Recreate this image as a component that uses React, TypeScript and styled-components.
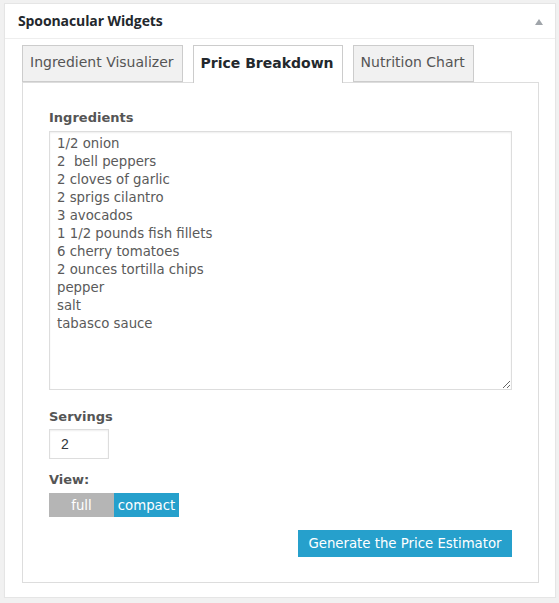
import React, { useState } from "react";
import styled, { createGlobalStyle } from "styled-components";

const Global = createGlobalStyle`
  html, body { margin: 0; padding: 0; background: #f1f1f1; }
  body { font-family: "DejaVu Sans", Verdana, sans-serif; }
  * { box-sizing: border-box; }
`;

const Widget = styled.div`
  margin: 3px 0 0 4px;
  width: 552px;
  height: 595px;
  background: #fff;
  border: 1px solid #e5e5e5;
  box-shadow: 0 1px 1px rgba(0, 0, 0, 0.04);
  display: flex;
  flex-direction: column;
`;

const Header = styled.div`
  height: 35px;
  border-bottom: 1px solid #eee;
  display: flex;
  align-items: center;
  justify-content: space-between;
  padding: 0 12px 0 13px;
`;

const Title = styled.h2`
  margin: 0;
  font-family: "Open Sans", sans-serif;
  font-size: 14px;
  font-weight: 700;
  letter-spacing: -0.1px;
  color: #23282d;
  line-height: 1;
`;

const Toggle = styled.span`
  width: 0;
  height: 0;
  border-left: 4px solid transparent;
  border-right: 4px solid transparent;
  border-bottom: 6px solid #a0a5aa;
  margin-top: 2px;
`;

const Body = styled.div`
  padding: 6px 16px 0 17px;
  display: flex;
  flex-direction: column;
`;

const TabBar = styled.div`
  display: flex;
  gap: 10px;
  height: 38px;
  position: relative;
  z-index: 1;
`;

const Tab = styled.button<{ $active?: boolean }>`
  height: ${(p) => (p.$active ? "38px" : "37px")};
  padding: 0 8px 3px 7px;
  border: 1px solid #ccc;
  border-bottom: ${(p) => (p.$active ? "none" : "1px solid #ccc")};
  background: ${(p) => (p.$active ? "#fff" : "#f1f1f1")};
  font-family: "DejaVu Sans", Verdana, sans-serif;
  font-size: 14px;
  font-weight: ${(p) => (p.$active ? 700 : 400)};
  color: ${(p) => (p.$active ? "#23282d" : "#555")};
  cursor: pointer;
  display: flex;
  align-items: center;
`;

const Panel = styled.div`
  margin-top: -1px;
  width: 517px;
  height: 501px;
  border: 1px solid #ddd;
  padding: 26px 26px 0 26px;
  display: flex;
  flex-direction: column;
`;

const Label = styled.label<{ $gap: number; $top?: number }>`
  display: block;
  font-size: 13px;
  font-weight: 700;
  line-height: 18px;
  color: #555;
  margin-top: ${(p) => p.$top ?? 0}px;
  margin-bottom: ${(p) => p.$gap}px;
`;

const Area = styled.textarea`
  width: 463px;
  height: 259px;
  border: 1px solid #ddd;
  box-shadow: inset 0 1px 2px rgba(0, 0, 0, 0.07);
  padding: 3px 7px;
  font-family: "DejaVu Sans", Verdana, sans-serif;
  font-size: 13.3px;
  line-height: 18px;
  color: #5a5a5a;
  resize: both;
  outline: none;
  margin: 0;
`;

const NumberInput = styled.input`
  width: 60px;
  height: 30px;
  border: 1px solid #ddd;
  box-shadow: inset 0 1px 2px rgba(0, 0, 0, 0.07);
  padding: 0 11px;
  font-family: "Liberation Sans", Arial, sans-serif;
  font-size: 14px;
  color: #32373c;
  outline: none;
  margin: 0;
`;

const Switch = styled.div`
  display: flex;
`;

const SwitchOption = styled.button<{ $on?: boolean }>`
  width: 65px;
  height: 24px;
  border: none;
  padding: 0;
  background: ${(p) => (p.$on ? "#26a0cc" : "#b5b5b5")};
  color: #fff;
  font-family: "DejaVu Sans", Verdana, sans-serif;
  font-size: 13.3px;
  cursor: pointer;
`;

const Actions = styled.div`
  display: flex;
  justify-content: flex-end;
  margin-top: 13px;
`;

const Primary = styled.button`
  width: 214px;
  height: 27px;
  border: none;
  padding: 0;
  background: #26a0cc;
  color: #fff;
  font-family: "DejaVu Sans", Verdana, sans-serif;
  font-size: 13.3px;
  cursor: pointer;
`;

const ingredients = `1/2 onion
2  bell peppers
2 cloves of garlic
2 sprigs cilantro
3 avocados
1 1/2 pounds fish fillets
6 cherry tomatoes
2 ounces tortilla chips
pepper
salt
tabasco sauce`;

export default function App() {
  const [tab, setTab] = useState(1);
  const [view, setView] = useState("compact");
  const tabs = ["Ingredient Visualizer", "Price Breakdown", "Nutrition Chart"];
  return (
    <>
      <Global />
      <Widget>
        <Header>
          <Title>Spoonacular Widgets</Title>
          <Toggle />
        </Header>
        <Body>
          <TabBar>
            {tabs.map((t, i) => (
              <Tab key={t} $active={i === tab} onClick={() => setTab(i)}>
                {t}
              </Tab>
            ))}
          </TabBar>
          <Panel>
            <Label $gap={4}>Ingredients</Label>
            <Area defaultValue={ingredients} />
            <Label $top={18} $gap={3}>Servings</Label>
            <NumberInput defaultValue="2" />
            <Label $top={12} $gap={4}>View:</Label>
            <Switch>
              <SwitchOption $on={view === "full"} onClick={() => setView("full")}>full</SwitchOption>
              <SwitchOption $on={view === "compact"} onClick={() => setView("compact")}>compact</SwitchOption>
            </Switch>
            <Actions>
              <Primary>Generate the Price Estimator</Primary>
            </Actions>
          </Panel>
        </Body>
      </Widget>
    </>
  );
}
